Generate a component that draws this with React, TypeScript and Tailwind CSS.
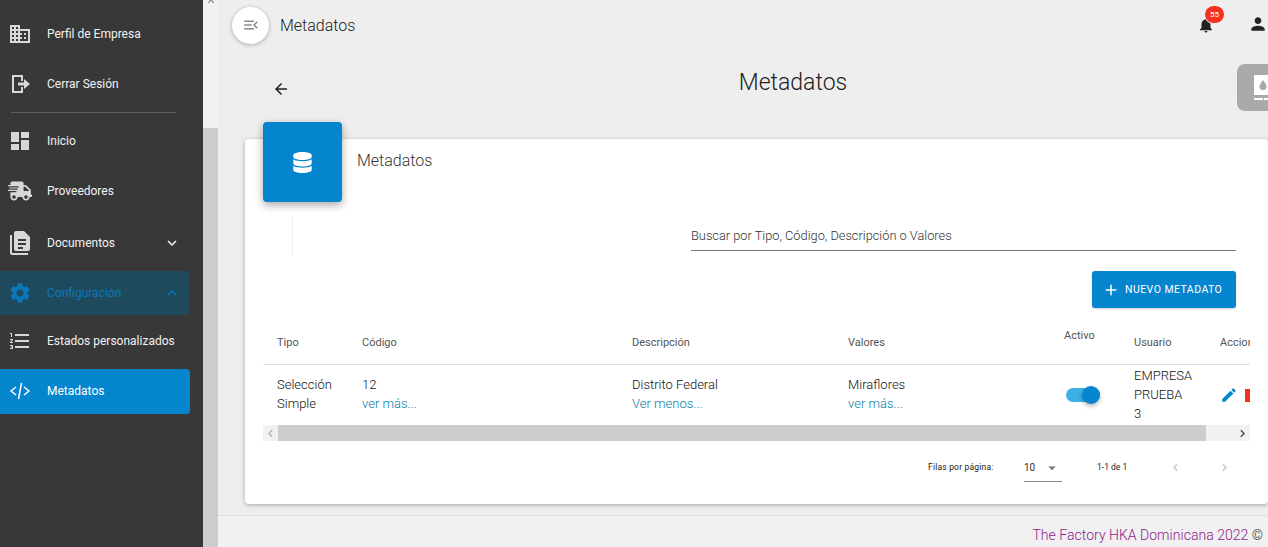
import { ReactNode } from 'react';
import { FaDatabase, FaShippingFast } from 'react-icons/fa';
import {
  MdArrowBack,
  MdBusiness,
  MdChevronLeft,
  MdChevronRight,
  MdDashboard,
  MdEdit,
  MdExpandLess,
  MdExpandMore,
  MdFormatListNumbered,
  MdMenuOpen,
  MdNotifications,
  MdPerson,
  MdSettings,
  MdAdd,
  MdArrowDropDown,
} from 'react-icons/md';

function LogoutIcon() {
  return (
    <svg viewBox="0 0 24 24" className="w-6 h-6 text-[#d8d8d8]" fill="currentColor">
      <path d="M4 3h11v6h-2V5H6v14h7v-4h2v6H4z" />
      <path d="M10 10.500h6V7l6 5-6 5v-3.500h-6z" />
    </svg>
  );
}

function DocsIcon() {
  return (
    <svg viewBox="0 0 24 24" className="w-6 h-6 text-[#d8d8d8]" fill="currentColor">
      <path d="M4 4v18h16v2H4c-1.100 0-2-.9-2-2V4z" />
      <path
        fillRule="evenodd"
        d="M8 0h8l6 6v12c0 1.100-.9 2-2 2H8c-1.100 0-2-.9-2-2V2c0-1.100.9-2 2-2zm2 8v2h8V8zm0 4v2h8v-2zm0 4v2h5v-2z"
      />
    </svg>
  );
}

function CodeIcon() {
  return (
    <svg viewBox="0 0 24 24" className="w-6 h-6" fill="none" stroke="currentColor" strokeWidth="1.500">
      <path d="M8 8l-5 4 5 4M16 8l5 4-5 4M13.500 4l-3 16" />
    </svg>
  );
}

function NavItem({
  icon,
  label,
  right,
  className = '',
}: {
  icon: ReactNode;
  label: string;
  right?: ReactNode;
  className?: string;
}) {
  return (
    <div className={`flex items-center h-11 w-[190px] pl-2 pr-[6px] rounded-r text-[#f2f2f2] ${className}`}>
      <span className="w-[39px] shrink-0 flex">{icon}</span>
      <span className="text-[12px] flex-1 whitespace-nowrap">{label}</span>
      {right}
    </div>
  );
}

export default function App() {
  return (
    <div className="flex w-[1268px] h-[547px] overflow-hidden bg-[#eeeeee] font-['Roboto',sans-serif]">
      {/* Sidebar */}
      <aside className="w-[203px] shrink-0 bg-[#383838] pt-3">
        <NavItem icon={<MdBusiness size={24} className="text-[#d8d8d8]" />} label="Perfil de Empresa" />
        <NavItem className="mt-[6px]" icon={<LogoutIcon />} label="Cerrar Sesión" />
        <div className="ml-[11px] w-[165px] h-px bg-[#5e5e5e] mt-[6px]" />
        <NavItem className="mt-[6px]" icon={<MdDashboard size={24} className="text-[#d8d8d8]" />} label="Inicio" />
        <NavItem className="mt-[6px]" icon={<FaShippingFast size={24} className="text-[#d8d8d8]" />} label="Proveedores" />
        <NavItem
          className="mt-2"
          icon={<DocsIcon />}
          label="Documentos"
          right={<MdExpandMore size={18} className="mr-[3px]" />}
        />
        <NavItem
          className="mt-[6px] !text-[#0a78bb] bg-[#1f4a5e]"
          icon={<MdSettings size={24} />}
          label="Configuración"
          right={<MdExpandLess size={18} className="mr-[3px]" />}
        />
        <NavItem className="mt-1" icon={<MdFormatListNumbered size={24} className="text-[#d8d8d8]" />} label="Estados personalizados" />
        <NavItem className="mt-[6px] h-[45px] !text-white bg-[#0685cf] pb-[2px]" icon={<CodeIcon />} label="Metadatos" />
      </aside>

      {/* Scrollbar of the sidebar */}
      <div className="w-[15px] shrink-0 bg-[#f1f1f1] flex flex-col">
        <div className="h-[128px] flex justify-center">
          <svg viewBox="0 0 10 4" className="w-[10px] h-1" fill="#555555">
            <path d="M2 3l2-3 1 0 -2 3zM8 3L6 0 5 0l2 3z" />
          </svg>
        </div>
        <div className="flex-1 bg-[#cdcdcd]" />
      </div>

      {/* Main */}
      <main className="flex-1 min-w-0 flex flex-col relative">
        <header className="h-[50px] flex items-center pl-[14px]">
          <button className="w-[37px] h-[37px] rounded-full bg-white shadow-[0_1px_4px_rgba(0,0,0,0.3)] flex items-center justify-center text-[#8a8a8a]">
            <MdMenuOpen size={18} />
          </button>
          <span className="ml-[11px] pt-px text-[16px] font-light text-[#222222]">Metadatos</span>
          <div className="ml-auto relative mr-[53px] text-[#222222]">
            <MdNotifications size={18} />
            <span className="absolute -top-[11px] left-[7px] w-[21px] h-[19px] rounded-full bg-[#f4301f] border border-[#f8f8f8] text-white text-[8px] flex items-center justify-center">
              55
            </span>
          </div>
          <MdPerson size={20} className="absolute right-0 top-[14px] text-[#222222]" />
        </header>

        <div className="h-[89px] relative flex justify-center pt-[17px] pl-[100px]">
          <MdArrowBack size={18} className="absolute left-[54px] top-[30px] text-[#222222]" />
          <h1 className="text-[23px] leading-8 font-light text-[#222222]">Metadatos</h1>
          <div className="absolute right-0 top-[14px] w-[31px] h-[47px] rounded-l-lg bg-[#a9a9a9] overflow-hidden">
            <svg viewBox="0 0 31 47" className="w-[31px] h-[47px]">
              <rect x="17" y="11" width="14" height="20" fill="#ffffff" />
              <path d="M26 16c-2 3-3.500 4.500-3.500 6.500a3.500 3.500 0 0 0 7 0C29.500 20.500 28 19 26 16z" fill="#a9a9a9" />
              <rect x="17" y="34" width="9" height="2" fill="#ffffff" />
              <rect x="27" y="34" width="4" height="2" fill="#ffffff" />
            </svg>
          </div>
        </div>

        {/* Card */}
        <section className="ml-[27px] h-[365px] bg-white rounded shadow-[0_1px_4px_rgba(0,0,0,0.3)] relative">
          <div className="absolute -top-[17px] left-[18px] w-[79px] h-[80px] rounded bg-[#0685cf] shadow-[0_3px_8px_rgba(0,0,0,0.35)] flex items-center justify-center text-white">
            <FaDatabase size={21} />
          </div>
          <h2 className="pl-[112px] pt-[12px] text-[16px] leading-[20px] font-light text-[#333333]">Metadatos</h2>

          <div className="flex mt-[46px] h-[38px]">
            <div className="ml-[47px] w-px bg-[#eeeeee]" />
            <div className="ml-[398px] w-[545px] border-b border-[#777777] text-[12.8px] font-light text-[#333333] pt-[9px] h-[34px]">
              Buscar por Tipo, Código, Descripción o Valores
            </div>
          </div>

          <div className="flex justify-end pr-[32px] mt-[16px]">
            <button className="w-[144px] h-[37px] pl-[10px] bg-[#0685cf] rounded-[3px] text-white text-[10.5px] tracking-[0.45px] flex items-center gap-[5px] shadow-[0_1px_2px_rgba(0,0,0,0.2)]">
              <MdAdd size={18} />
              NUEVO METADATO
            </button>
          </div>

          {/* Table */}
          <div className="ml-[18px] mt-[18px] w-[987px] overflow-hidden">
            <div className="w-[1040px]">
              <div className="grid grid-cols-[85px_270px_216px_216px_70px_86px_97px] h-[39px] border-b border-[#e0e0e0] text-[11px] text-[#555555] items-center">
                <span className="pl-[14px] -mt-[3px]">Tipo</span>
                <span className="pl-[14px] -mt-[3px]">Código</span>
                <span className="pl-[14px] -mt-[3px]">Descripción</span>
                <span className="pl-[14px] -mt-[3px]">Valores</span>
                <span className="pl-[14px] -mt-[17px]">Activo</span>
                <span className="pl-[14px] -mt-[3px]">Usuario</span>
                <span className="pl-[14px] -mt-[3px]">Acciones</span>
              </div>
              <div className="grid grid-cols-[85px_270px_216px_216px_70px_86px_97px] h-[60px] pb-[2px] text-[13px] font-light leading-[19px] text-[#111111] items-center">
                <span className="pl-[14px]">Selección Simple</span>
                <div className="pl-[14px]">
                  <div>12</div>
                  <div className="text-[#0b7ea8]">ver más...</div>
                </div>
                <div className="pl-[14px]">
                  <div>Distrito Federal</div>
                  <div className="text-[#0b7ea8]">Ver menos...</div>
                </div>
                <div className="pl-[14px]">
                  <div>Miraflores</div>
                  <div className="text-[#0b7ea8]">ver más...</div>
                </div>
                <div className="pl-[16px] mt-[2px] relative h-5 flex items-center">
                  <div className="w-[34px] h-[14px] rounded-full bg-[#3cb0e4]" />
                  <div className="absolute left-[32px] top-[1px] w-[18px] h-[18px] rounded-full bg-[#0685cf] shadow-[0_2px_4px_rgba(0,0,0,0.3)]" />
                </div>
                <span className="pl-[14px] pr-[20px]">EMPRESA PRUEBA 3</span>
                <div className="pl-[14px] mt-[2px] flex items-center gap-[7px]">
                  <MdEdit size={18} className="text-[#0685cf]" />
                  <div className="w-[5px] h-[13px] bg-[#f4301f]" />
                </div>
              </div>
            </div>
            {/* Horizontal scrollbar */}
            <div className="h-[16px] bg-[#f1f1f1] flex items-center">
              <MdChevronLeft size={15} className="text-[#b0b0b0]" />
              <div className="h-full w-[928px] bg-[#cdcdcd]" />
              <MdChevronRight size={15} className="ml-auto text-[#444444]" />
            </div>
          </div>

          {/* Pagination */}
          <div className="flex items-center text-[8.5px] text-[#222222] mt-[11px] h-[30px] pl-[683px]">
            <span className="w-[96px] tracking-[0.2px]">Filas por página:</span>
            <div className="w-[38px] h-[30px] border-b border-[#888888] flex items-center text-[#333333] text-[10px] pt-[2px]">
              10
              <MdArrowDropDown size={18} className="ml-auto mr-px text-[#777777]" />
            </div>
            <span className="ml-[35px] w-[71px]">1-1 de 1</span>
            <MdChevronLeft size={15} className="text-[#c4c4c4]" />
            <MdChevronRight size={15} className="ml-[34px] text-[#c4c4c4]" />
          </div>
        </section>

        <footer className="mt-[11px] flex-1 border-t border-[#e0e0e0] bg-[#f1f1f1] text-right pr-[5px] pt-[10px] text-[14px] tracking-[0.03px] font-light leading-[18px] text-[#8e1a8e]">
          The Factory HKA Dominicana 2022 <span className="text-[#333333]">©</span>
        </footer>
      </main>
    </div>
  );
}
